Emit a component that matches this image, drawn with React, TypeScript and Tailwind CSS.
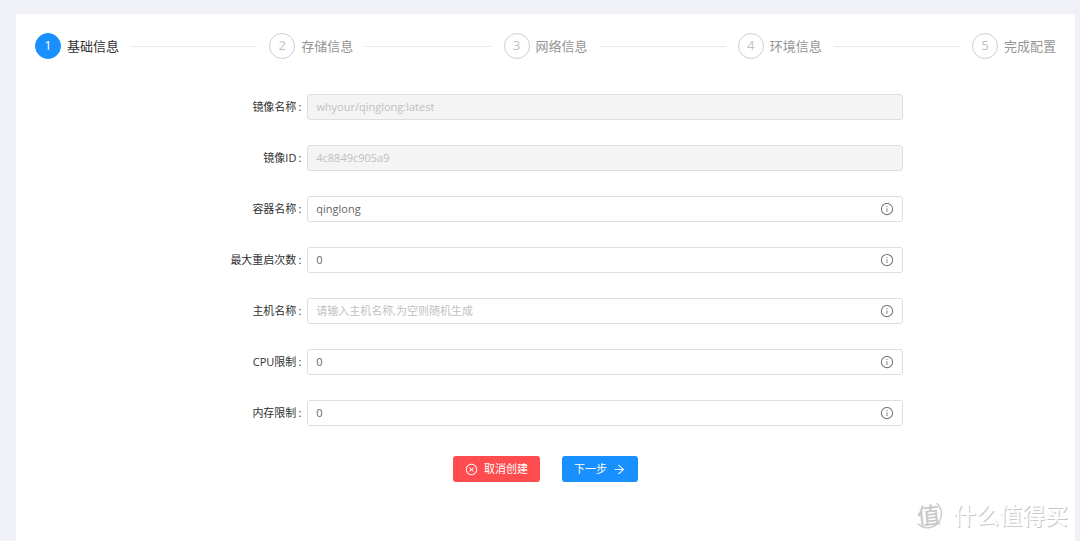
import { useState } from "react";
import clsx from "clsx";
import { AiOutlineArrowRight, AiOutlineCloseCircle, AiOutlineInfoCircle } from "react-icons/ai";

const steps = ["基础信息", "存储信息", "网络信息", "环境信息", "完成配置"];

type Field = {
  id: string;
  label: string;
  value: string;
  placeholder?: string;
  disabled?: boolean;
};

const fields: Field[] = [
  { id: "image", label: "镜像名称", value: "whyour/qinglong:latest", disabled: true },
  { id: "imageId", label: "镜像ID", value: "4c8849c905a9", disabled: true },
  { id: "container", label: "容器名称", value: "qinglong" },
  { id: "restarts", label: "最大重启次数", value: "0" },
  { id: "host", label: "主机名称", value: "", placeholder: "请输入主机名称,为空则随机生成" },
  { id: "cpu", label: "CPU限制", value: "0" },
  { id: "memory", label: "内存限制", value: "0" },
];

function Steps() {
  return (
    <ol className="flex items-center">
      {steps.map((title, i) => (
        <li
          key={title}
          aria-current={i === 0 ? "step" : undefined}
          className={clsx("flex items-center", i < steps.length - 1 && "flex-auto")}
        >
          <span
            className={clsx(
              "flex size-[26px] shrink-0 items-center justify-center rounded-full border text-[13px]",
              i === 0
                ? "border-[#1890ff] bg-[#1890ff] text-white"
                : "border-[#cfcfcf] bg-white text-[#bfbfbf]",
            )}
          >
            {i + 1}
          </span>
          <span
            className={clsx(
              "ml-1.5 text-[13px] leading-5 whitespace-nowrap",
              i === 0 ? "text-[#303030]" : "text-[#959595]",
            )}
          >
            {title}
          </span>
          {i < steps.length - 1 && <span className="mx-3 h-px flex-1 bg-[#e8e8e8]" />}
        </li>
      ))}
    </ol>
  );
}

function FormRow({ field }: { field: Field }) {
  const [value, setValue] = useState(field.value);
  return (
    <div className="grid grid-cols-[272fr_595fr_153fr] items-center">
      <label htmlFor={field.id} className="pr-1.5 text-right text-[11px] leading-4 text-[#303030]">
        {field.label}
        <span className="ml-0.5">:</span>
      </label>
      <div
        className={clsx(
          "flex h-[26px] items-center rounded-[3px] border border-[#dedede] px-2",
          field.disabled ? "bg-[#f4f4f4]" : "bg-white",
        )}
      >
        <input
          id={field.id}
          type="text"
          value={value}
          placeholder={field.placeholder}
          disabled={field.disabled}
          onChange={(e) => setValue(e.target.value)}
          className="min-w-0 flex-1 bg-transparent text-[11px] leading-4 text-[#666666] outline-none placeholder:text-[#bfbfbf] disabled:text-[#c0c0c0]"
        />
        {!field.disabled && <AiOutlineInfoCircle className="size-[14px] text-[#777777]" />}
      </div>
    </div>
  );
}

function Watermark() {
  return (
    <div
      aria-hidden="true"
      className="pointer-events-none absolute right-3 bottom-3 flex items-center gap-2.5 font-['Noto_Sans_CJK_SC',sans-serif]"
    >
      <span className="relative flex size-[30px] items-center justify-center">
        <svg viewBox="0 0 30 30" className="absolute inset-0 size-full">
          <path
            d="M24 4.5A13.6 13.6 0 0 1 5 25"
            fill="none"
            stroke="#c9c9c9"
            strokeWidth="1.4"
            strokeLinecap="round"
          />
        </svg>
        <span className="-rotate-6 text-[23px] leading-[30px] font-medium text-[#c9c9c9]">值</span>
      </span>
      <span className="text-[23px] leading-[30px] font-medium text-white [text-shadow:1px_1px_0_#c8c8c8]">
        什么值得买
      </span>
    </div>
  );
}

export default function App() {
  return (
    <div className="flex min-h-screen flex-col bg-[#f0f1f6] pt-3.5 pr-[5px] pl-4 font-['Open_Sans','Noto_Sans_CJK_SC',sans-serif]">
      <main className="flex-1 bg-white px-[19px] pt-[19px] pb-8">
        <Steps />
        <form className="mt-[35px]" onSubmit={(e) => e.preventDefault()}>
          <div className="flex flex-col gap-[25px]">
            {fields.map((field) => (
              <FormRow key={field.id} field={field} />
            ))}
          </div>
          <div className="mt-[30px] flex justify-center gap-[22px] text-[11px] leading-4 text-white">
            <button
              type="button"
              className="flex h-[26px] items-center gap-1.5 rounded-[3px] bg-[#ff4d4f] px-3"
            >
              <AiOutlineCloseCircle className="size-[13px]" />
              取消创建
            </button>
            <button
              type="submit"
              className="flex h-[26px] items-center gap-1.5 rounded-[3px] bg-[#1890ff] px-3"
            >
              下一步
              <AiOutlineArrowRight className="size-[13px]" />
            </button>
          </div>
        </form>
      </main>
      <Watermark />
    </div>
  );
}
